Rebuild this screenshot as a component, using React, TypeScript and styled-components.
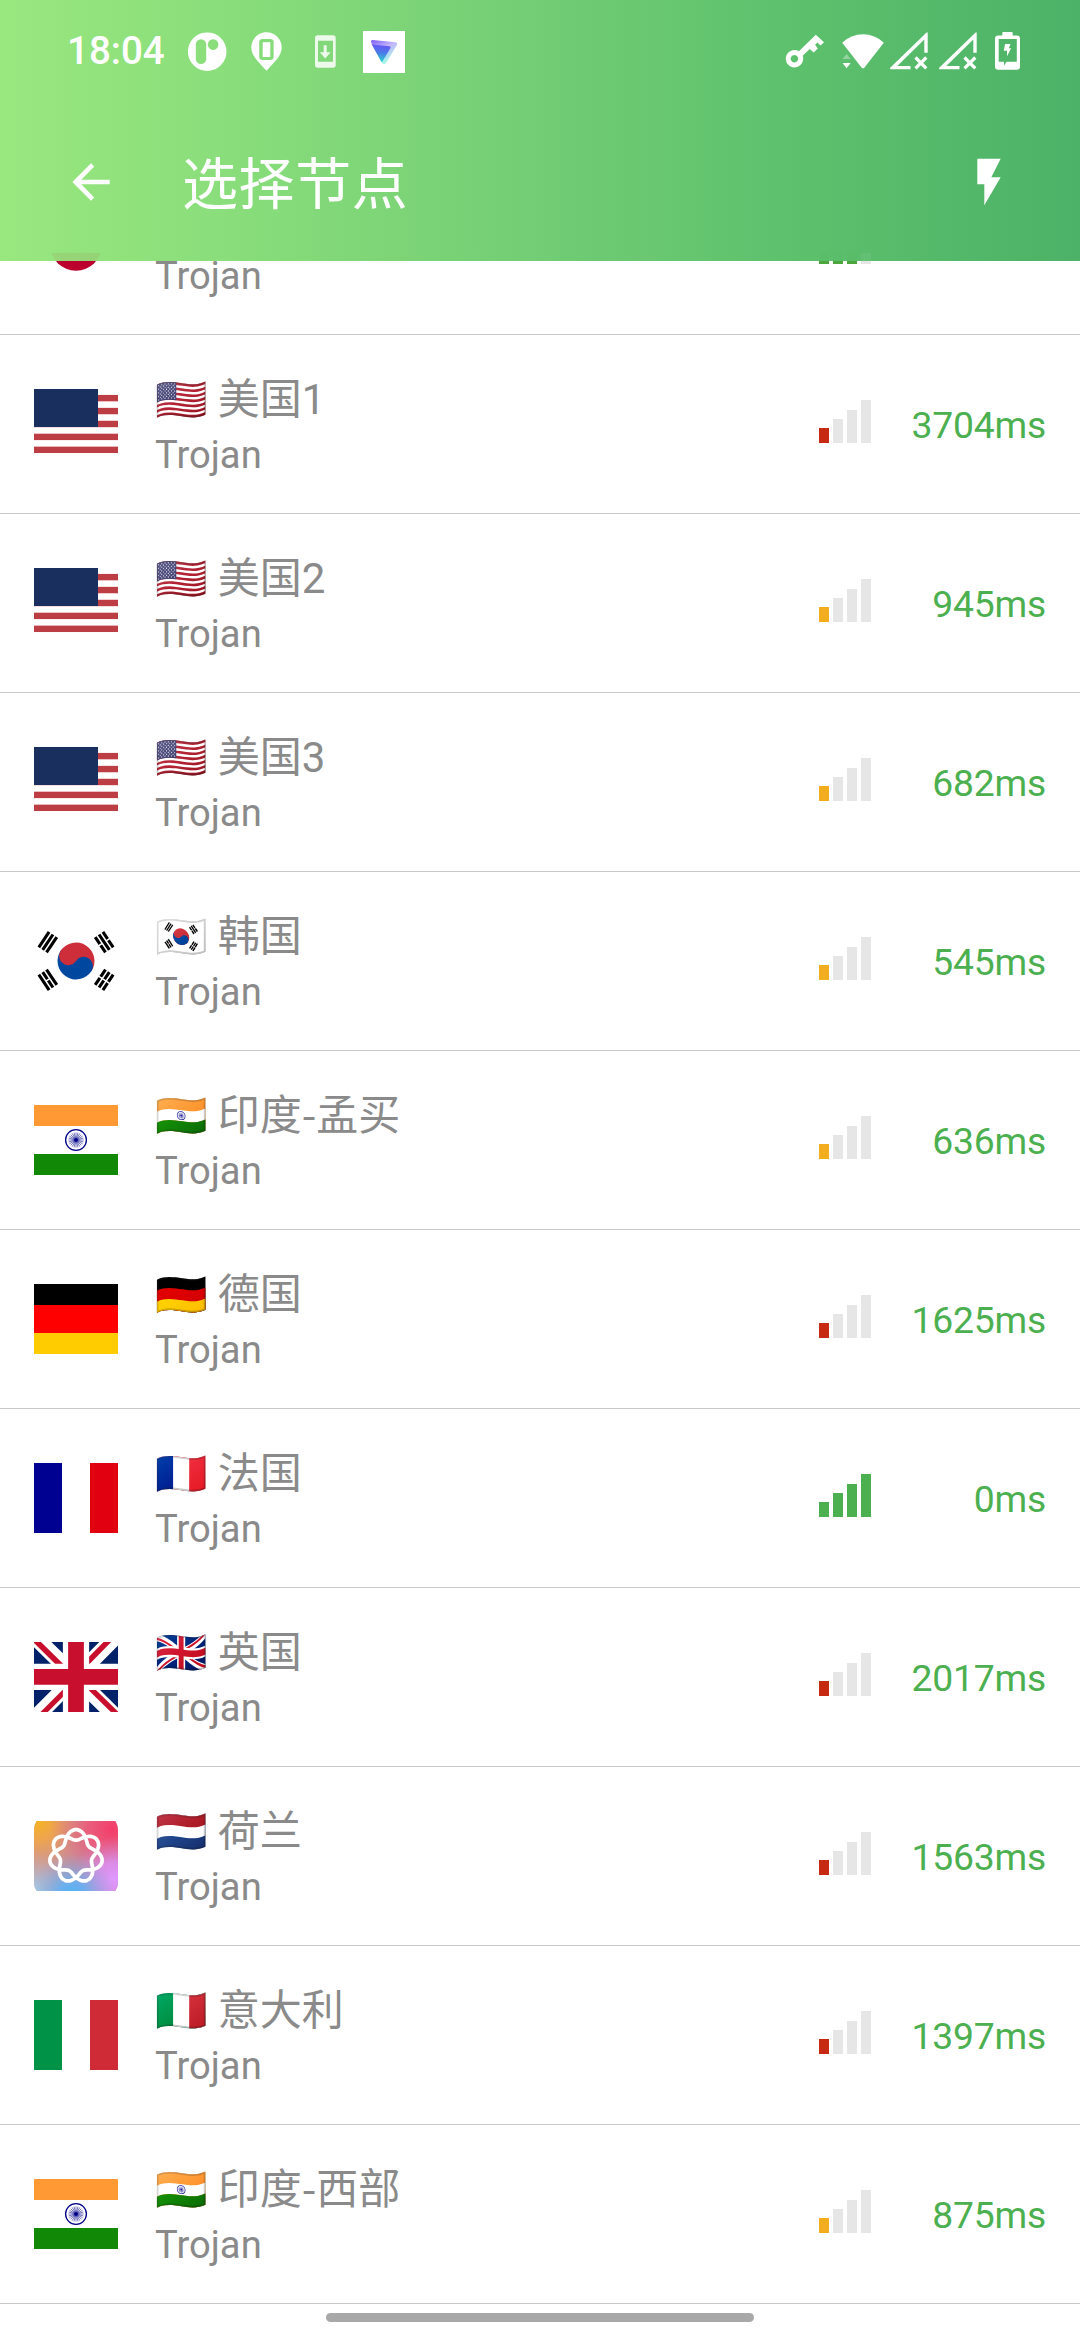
import React from "react";
import styled, { createGlobalStyle } from "styled-components";

const HEADER_TONES = "#99e77f 0%, #87dc7a 24%, #72cd74 50%, #5ec16d 72%, #4cb267 100%";

const GlobalStyle = createGlobalStyle`
  body {
    margin: 0;
    background: #ffffff;
    font-family: Roboto, "Noto Sans CJK SC", "Noto Color Emoji", sans-serif;
  }
`;

const Screen = styled.div`
  display: flex;
  flex-direction: column;
  width: 1080px;
  height: 2340px;
  overflow: hidden;
  background: linear-gradient(90deg, ${HEADER_TONES}) top / 100% 261px no-repeat #ffffff;
`;

const Header = styled.header`
  position: relative;
  z-index: 1;
  flex: none;
  height: 261px;
  color: #ffffff;

  &::before {
    content: "";
    position: absolute;
    inset: 0;
    z-index: -1;
    background: linear-gradient(90deg, ${HEADER_TONES});
    opacity: 0.93;
  }
`;

const StatusBar = styled.div`
  display: flex;
  align-items: flex-start;
  justify-content: space-between;
  height: 73px;
  padding: 31px 59px 0 67px;
  box-sizing: border-box;
`;

const StatusGroup = styled.div`
  display: flex;
  height: 42px;
`;

const Clock = styled.time`
  width: 121px;
  font-size: 38.5px;
  line-height: 39px;
  font-weight: 500;
`;

const StatusGlyph = styled.svg<{ $before?: number }>`
  flex: none;
  height: 42px;
  margin-left: ${(p) => p.$before ?? 0}px;
  fill: #ffffff;
`;

const AppBar = styled.div`
  display: flex;
  align-items: center;
  height: 157px;
  margin-top: 31px;
  padding: 0 63px;
  box-sizing: border-box;
`;

const BarButton = styled.button`
  display: flex;
  padding: 0 0 1px;
  border: 0;
  background: none;
  color: inherit;

  svg {
    width: 56px;
    height: 56px;
    fill: currentColor;
  }
`;

const Title = styled.h1`
  flex: 1;
  margin: 0 0 0 63px;
  padding-top: 5px;
  font-size: 56px;
  line-height: 70px;
  font-weight: 400;
  letter-spacing: 0.6px;
`;

const NodeViewport = styled.main`
  flex: 1;
  min-height: 0;
  margin-top: -8px;
  overflow: hidden;
`;

const NodeList = styled.ul`
  margin: -97px 0 0;
  padding: 0;
  list-style: none;
`;

const NodeRow = styled.li`
  display: flex;
  height: 179px;
  padding: 0 34px;
  box-sizing: border-box;
  border-bottom: 1px solid #c8c8c8;
`;

const FlagIcon = styled.svg`
  flex: none;
  width: 84px;
  height: 70px;
  margin-top: 54px;
`;

const NodeText = styled.div`
  flex: 1;
  margin-left: 37px;
  padding-top: 38px;
  color: #8a8a8a;
`;

const NodeName = styled.div`
  height: 54px;
  font-size: 42px;
  line-height: 54px;
  white-space: nowrap;
`;

const Dash = styled.span`
  font-family: "Noto Sans CJK SC", sans-serif;
  line-height: 0;
`;

const NodeProtocol = styled.div`
  height: 54px;
  margin-top: 1px;
  font-size: 38.2px;
  line-height: 54px;
`;

const SignalMeter = styled.div`
  display: flex;
  align-items: flex-end;
  gap: 4.4px;
  height: 43px;
  margin-top: 65px;
`;

const SignalBar = styled.span<{ $height: number; $color: string }>`
  width: 9.7px;
  height: ${(p) => p.$height}px;
  background: ${(p) => p.$color};
`;

const Latency = styled.span`
  width: 175px;
  margin-top: 63px;
  color: #4caf50;
  font-size: 37.3px;
  line-height: 54px;
  letter-spacing: -0.2px;
  text-align: right;
`;

const GestureBar = styled.div`
  flex: none;
  width: 428px;
  height: 9px;
  margin: 9px auto 18px;
  border-radius: 5px;
  background: #a8a8a8;
`;

type Country = "jp" | "us" | "kr" | "in" | "de" | "fr" | "gb" | "nl" | "it";

const Stripes = ({ colors, vertical }: { colors: string[]; vertical?: boolean }) => (
  <>
    {colors.map((c, i) =>
      vertical ? (
        <rect key={i} x={i * 28} width="28" height="70" fill={c} />
      ) : (
        <rect key={i} y={[0, 21, 49][i]} width="84" height={[21, 28, 21][i]} fill={c} />
      )
    )}
  </>
);

const TRIGRAM = "M-6-26H6v2H-6Zm0 3H6v2H-6Zm0 3H6v2H-6Z";
const TRIGRAM_BELOW = "M-6 18H6v2H-6Zm0 3H6v2H-6Zm0 3H6v2H-6Z";

const knotPath = (() => {
  const steps = 280;
  const points: string[] = [];
  for (let i = 0; i < steps; i++) {
    const t = (i / steps) * Math.PI * 4;
    const r = 21.3 + 5.3 * Math.cos(3.5 * t);
    points.push(`${(42 + r * Math.sin(t)).toFixed(2)} ${(35.2 - r * Math.cos(t)).toFixed(2)}`);
  }
  return `M${points.join("L")}Z`;
})();

const flags: Record<Country, React.ReactNode> = {
  jp: <circle cx="42" cy="35" r="25.8" fill="#bc002d" />,
  us: (
    <>
      {[5.92, 18.85, 31.77, 44.69, 57.62].map((y) => (
        <rect key={y} y={y} width="84" height="6.4" fill="#bd3d44" />
      ))}
      <rect width="64" height="38" fill="#192f5d" />
    </>
  ),
  kr: (
    <g transform="translate(42 35) scale(1.54)">
      <g transform="rotate(-56.3)">
        <path d={TRIGRAM} />
        <path d={TRIGRAM_BELOW} />
        <path stroke="#fff" d="M0 17v10" />
        <path fill="#cd2e3a" d="M0-12a12 12 0 0 1 0 24Z" />
        <path fill="#0047a0" d="M0-12a12 12 0 0 0 0 24A6 6 0 0 0 0 0Z" />
        <circle cy="-6" r="6" fill="#cd2e3a" />
      </g>
      <g transform="rotate(-123.7)">
        <path d={TRIGRAM} />
        <path d={TRIGRAM_BELOW} />
        <path stroke="#fff" d="M0-23.5v3M0 17v3.5m0 3v3" />
      </g>
    </g>
  ),
  in: (
    <>
      <Stripes colors={["#ff9933", "#ffffff", "#128807"]} />
      <g transform="translate(42 35)" stroke="#000088">
        <circle r="10.4" fill="none" strokeWidth="1.3" />
        <circle r="1.8" fill="#000088" stroke="none" />
        {Array.from({ length: 24 }, (_, i) => (
          <path key={i} d="M0 1V7.6" strokeWidth="0.5" transform={`rotate(${i * 15})`} />
        ))}
      </g>
    </>
  ),
  de: <Stripes colors={["#000000", "#ff0000", "#ffcc00"]} />,
  fr: <Stripes vertical colors={["#000091", "#ffffff", "#e1000f"]} />,
  it: <Stripes vertical colors={["#009246", "#ffffff", "#ce2b37"]} />,
  gb: (
    <svg width="84" height="70" viewBox="0 42.67 512 426.67">
      <path fill="#012169" d="M0 0h512v512H0z" />
      <path
        fill="#fff"
        d="M512 0v64L322 256l190 187v69h-67L254 324 68 512H0v-68l186-187L0 74V0h62l192 188L440 0z"
      />
      <path
        fill="#c8102e"
        d="m184 324 11 34L42 512H0v-3zm124-12 54 8 150 147v45zM512 0 320 196l-4-44L466 0zM0 1l193 189-59-8L0 49z"
      />
      <path fill="#fff" d="M176 0v512h160V0zM0 176v160h512V176z" />
      <path fill="#c8102e" d="M0 208v96h512v-96zM208 0v512h96V0z" />
    </svg>
  ),
  nl: (
    <>
      <defs>
        <clipPath id="tile">
          <rect y="-7" width="84" height="84" rx="16" />
        </clipPath>
        <radialGradient id="gold" gradientUnits="userSpaceOnUse" cx="4" cy="0" r="60">
          <stop offset="0" stopColor="#f7b322" />
          <stop offset="0.35" stopColor="#f2a746" stopOpacity="0.85" />
          <stop offset="1" stopColor="#e09a7a" stopOpacity="0" />
        </radialGradient>
        <radialGradient id="rose" gradientUnits="userSpaceOnUse" cx="78" cy="8" r="62">
          <stop offset="0" stopColor="#f43c69" />
          <stop offset="0.4" stopColor="#ee5677" stopOpacity="0.85" />
          <stop offset="1" stopColor="#d07a90" stopOpacity="0" />
        </radialGradient>
        <radialGradient id="sky" gradientUnits="userSpaceOnUse" cx="38" cy="76" r="44">
          <stop offset="0" stopColor="#46b8ff" />
          <stop offset="0.35" stopColor="#62b2f6" stopOpacity="0.85" />
          <stop offset="1" stopColor="#98a8d8" stopOpacity="0" />
        </radialGradient>
        <radialGradient id="violet" gradientUnits="userSpaceOnUse" cx="80" cy="58" r="42">
          <stop offset="0" stopColor="#df98ff" />
          <stop offset="0.4" stopColor="#dc90f4" stopOpacity="0.85" />
          <stop offset="1" stopColor="#d080d0" stopOpacity="0" />
        </radialGradient>
        <radialGradient id="mist" gradientUnits="userSpaceOnUse" cx="0" cy="70" r="40">
          <stop offset="0" stopColor="#a4d4f0" />
          <stop offset="1" stopColor="#c8b8b0" stopOpacity="0" />
        </radialGradient>
      </defs>
      <g clipPath="url(#tile)">
        <rect width="84" height="70" fill="#c58fa0" />
        {["gold", "rose", "mist", "violet", "sky"].map((id) => (
          <rect key={id} width="84" height="70" fill={`url(#${id})`} />
        ))}
        <path d={knotPath} fill="none" stroke="#ffffff" strokeWidth="3.7" />
      </g>
    </>
  ),
};

const IDLE = "#e6e6e6";
const BAR_HEIGHTS = [15, 24, 33, 43];
const levels = {
  poor: { color: "#c62a12", lit: 1 },
  fair: { color: "#f3ae20", lit: 1 },
  good: { color: "#4ba63c", lit: 3 },
  full: { color: "#4caf50", lit: 4 },
};

interface Node {
  country: Country;
  name: string;
  latency: string;
  level: keyof typeof levels;
}

const nodes: Node[] = [
  { country: "jp", name: "", latency: "188ms", level: "good" },
  { country: "us", name: "🇺🇸 美国1", latency: "3704ms", level: "poor" },
  { country: "us", name: "🇺🇸 美国2", latency: "945ms", level: "fair" },
  { country: "us", name: "🇺🇸 美国3", latency: "682ms", level: "fair" },
  { country: "kr", name: "🇰🇷 韩国", latency: "545ms", level: "fair" },
  { country: "in", name: "🇮🇳 印度-孟买", latency: "636ms", level: "fair" },
  { country: "de", name: "🇩🇪 德国", latency: "1625ms", level: "poor" },
  { country: "fr", name: "🇫🇷 法国", latency: "0ms", level: "full" },
  { country: "gb", name: "🇬🇧 英国", latency: "2017ms", level: "poor" },
  { country: "nl", name: "🇳🇱 荷兰", latency: "1563ms", level: "poor" },
  { country: "it", name: "🇮🇹 意大利", latency: "1397ms", level: "poor" },
  { country: "in", name: "🇮🇳 印度-西部", latency: "875ms", level: "fair" },
];

const NotificationIcons = () => (
  <>
    <StatusGlyph width="38.5" viewBox="188 31 38.5 42">
      <path
        fillRule="evenodd"
        d="M207.2 32.4a19.2 19.2 0 0 1 0 38.6a19.2 19.2 0 0 1 0-38.6zM201 39.3a5.2 5.2 0 0 0-5.2 5.2v14.4a5.2 5.2 0 0 0 10.4 0V44.5a5.2 5.2 0 0 0-5.2-5.2zM213.1 39.3a5.3 5.3 0 1 0 .01 0z"
      />
    </StatusGlyph>
    <StatusGlyph width="31" viewBox="250.5 31 31 42" $before={24}>
      <path
        fillRule="evenodd"
        d="M266 32.3c8.5 0 15.2 6.7 15.2 15.2C281.2 56 273.5 62.5 266 70.8C258.5 62.5 250.8 56 250.8 47.5C250.8 39 257.5 32.3 266 32.3zM262 39a3.3 3.3 0 0 0-3.3 3.3v14.5a3.3 3.3 0 0 0 3.3 3.3h7.8a3.3 3.3 0 0 0 3.3-3.3V42.3a3.3 3.3 0 0 0-3.3-3.3z"
      />
      <rect x="262.2" y="42.2" width="7.6" height="14.8" />
    </StatusGlyph>
    <StatusGlyph width="21" viewBox="315 31 21 42" $before={33.5}>
      <path
        fillOpacity="0.85"
        fillRule="evenodd"
        d="M317.7 35.3h15.3a2.7 2.7 0 0 1 2.7 2.7v27a2.7 2.7 0 0 1-2.7 2.7h-15.3A2.7 2.7 0 0 1 315 65V38a2.7 2.7 0 0 1 2.7-2.7zM318 40.7v21h15v-21zM323.7 45.3h3v7h3.9l-5.4 6.2-5.4-6.2h3.9z"
      />
    </StatusGlyph>
    <StatusGlyph width="42" viewBox="0 0 42 42" $before={27}>
      <defs>
        <linearGradient id="shieldBack" x1="0" y1="0" x2="0.5" y2="1">
          <stop offset="0" stopColor="#7d5cf8" />
          <stop offset="0.45" stopColor="#c3b6fb" />
          <stop offset="1" stopColor="#a5fbe8" />
        </linearGradient>
        <linearGradient id="shieldFront" x1="0.5" y1="0" x2="0.4" y2="1">
          <stop offset="0" stopColor="#6a50f6" />
          <stop offset="0.5" stopColor="#4b7be8" />
          <stop offset="1" stopColor="#27d8cc" />
        </linearGradient>
      </defs>
      <rect width="42" height="42" />
      <path
        d="M9.5 9L32.5 11.3Q35 11.8 33.8 14.2L23 32Q21 34.5 19.3 32L8.2 11.5Q7.5 9.2 9.5 9z"
        fill="url(#shieldBack)"
      />
      <path
        d="M8.2 12.5Q8.5 13.5 11 13.8L26.5 15.2Q28.3 15.5 27.3 17.3L19.3 30.8Q18.5 31.3 18 30.3z"
        fill="url(#shieldFront)"
      />
    </StatusGlyph>
  </>
);

const NoSignal = ({ before }: { before: number }) => (
  <StatusGlyph width="39" viewBox="0 0 39 42" $before={before}>
    <path
      fillRule="evenodd"
      d="M38.7 2.2Q38.7 .4 37.3 1.8L1.2 36.7Q.3 38.3 1.8 38.3H21.5V35H8.3L35.3 8.500V21.7H38.7z"
    />
    <path d="M26.5 26.5L37.3 37.3M37.3 26.5L26.5 37.3" stroke="#ffffff" strokeWidth="3.2" />
  </StatusGlyph>
);

const SystemIcons = () => (
  <>
    <StatusGlyph width="40" viewBox="784 31 40 42">
      <path
        fillRule="evenodd"
        d="M814.8 34.8L823 42.2L819.5 45.6L816.4 42.6L814.1 44.8L816.8 48.6L812.7 52.5L808.8 48.9L801.7 55.8A8.7 8.7 0 1 1 797.9 51.2zM793.4 55A3.7 3.7 0 1 0 793.41 55z"
      />
    </StatusGlyph>
    <StatusGlyph width="43" viewBox="841 31 43 42" $before={17}>
      <path d="M841.2 42.7Q850 34.2 862 34.2T882.8 42.7L863.3 67.7Q862 69 860.7 67.7z" />
      <path d="M841.5 63H849.7L845.6 68.3z" />
      <path d="M841.5 59H849.7L845.6 54z" fillOpacity="0.35" />
    </StatusGlyph>
    <NoSignal before={3.5} />
    <NoSignal before={10} />
    <StatusGlyph width="26" viewBox="995 31 26 42" $before={18.5}>
      <path
        fillRule="evenodd"
        d="M1003.5 32h8q1.2 0 1.2 1.2v2.3h4q3.3 0 3.3 3.3v27.7q0 3.3-3.3 3.3h-18.4q-3.3 0-3.3-3.3V38.8q0-3.3 3.3-3.3h4v-2.3q0-1.2 1.2-1.2zM998.7 39v22.7h5.3v4l2.5-4h10.3V39z"
      />
      <path d="M1005 44h5.5l-1.6 4.3h2.3l-4.2 8v-5.6h-3.2z" />
    </StatusGlyph>
  </>
);

const SignalStrength = ({ level }: { level: keyof typeof levels }) => (
  <SignalMeter>
    {BAR_HEIGHTS.map((h, i) => (
      <SignalBar key={h} $height={h} $color={i < levels[level].lit ? levels[level].color : IDLE} />
    ))}
  </SignalMeter>
);

const NameLabel = ({ name }: { name: string }) => {
  const [place, area] = name.split("-");
  return (
    <NodeName>
      {place}
      {area && <Dash>-</Dash>}
      {area}
    </NodeName>
  );
};

export default function App() {
  return (
    <Screen>
      <GlobalStyle />
      <Header>
        <StatusBar>
          <StatusGroup>
            <Clock>18:04</Clock>
            <NotificationIcons />
          </StatusGroup>
          <StatusGroup>
            <SystemIcons />
          </StatusGroup>
        </StatusBar>
        <AppBar>
          <BarButton aria-label="返回">
            <svg viewBox="0 0 24 24">
              <path d="M20 11H7.83l5.59-5.59L12 4l-8 8 8 8 1.41-1.41L7.83 13H20v-2z" />
            </svg>
          </BarButton>
          <Title>选择节点</Title>
          <BarButton aria-label="测速">
            <svg viewBox="0 0 24 24">
              <path d="M7 2v11h3v9l7-12h-4l4-8z" />
            </svg>
          </BarButton>
        </AppBar>
      </Header>
      <NodeViewport>
        <NodeList>
          {nodes.map((node, index) => (
            <NodeRow key={index}>
              <FlagIcon viewBox="0 0 84 70">{flags[node.country]}</FlagIcon>
              <NodeText>
                <NameLabel name={node.name} />
                <NodeProtocol>Trojan</NodeProtocol>
              </NodeText>
              <SignalStrength level={node.level} />
              <Latency>{node.latency}</Latency>
            </NodeRow>
          ))}
        </NodeList>
      </NodeViewport>
      <GestureBar />
    </Screen>
  );
}
